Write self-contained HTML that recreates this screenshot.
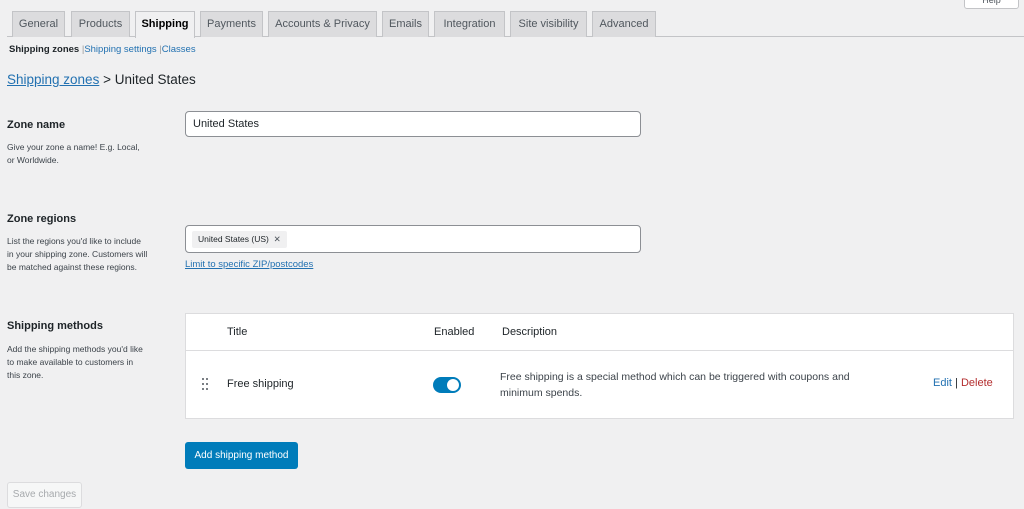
<!DOCTYPE html>
<html><head><style>
*{box-sizing:border-box;margin:0;padding:0}
body{width:1024px;height:509px;background:#f0f0f1;font-family:"Liberation Sans",sans-serif;color:#1d2327;position:relative;overflow:hidden;font-size:11px}
.a{position:absolute}
.tab{position:absolute;top:11px;height:26px;background:#dcdcde;border:1px solid #c3c4c7;border-bottom:none;font-size:11px;color:#50575e;text-align:center;line-height:24px}
.tab.on{background:#f0f0f1;color:#000;height:27px;font-weight:bold}
.lbl{font-size:11px;font-weight:bold;color:#1d2327}
.desc{font-size:8.5px;color:#3c434a;line-height:13px}
.inp{position:absolute;background:#fff;border:1px solid #8c8f94;border-radius:4px}
a{color:#2271b1}
</style></head><body>
<div class="a" style="left:964px;top:-6px;width:55px;height:15px;background:#fff;border:1px solid #c3c4c7;border-radius:3px;font-size:9px;text-align:center;color:#50575e">Help</div>
<div class="a" style="left:7px;top:36px;width:1017px;height:1px;background:#c3c4c7"></div>
<div class="tab" style="left:12px;width:53px">General</div>
<div class="tab" style="left:71px;width:59px">Products</div>
<div class="tab on" style="left:135px;width:60px">Shipping</div>
<div class="tab" style="left:200px;width:63px">Payments</div>
<div class="tab" style="left:268px;width:109px">Accounts &amp; Privacy</div>
<div class="tab" style="left:382px;width:47px">Emails</div>
<div class="tab" style="left:434px;width:71px">Integration</div>
<div class="tab" style="left:510px;width:77px">Site visibility</div>
<div class="tab" style="left:592px;width:64px">Advanced</div>
<div class="a" style="left:9px;top:44px;font-size:9.5px"><b>Shipping zones</b> <span style="color:#999">|</span><span style="color:#2271b1">Shipping settings</span> <span style="color:#999">|</span><span style="color:#2271b1">Classes</span></div>
<div class="a" style="left:7px;top:72px;font-size:13.5px"><a style="text-decoration:underline">Shipping zones</a> &gt; United States</div>
<div class="a lbl" style="left:7px;top:119px">Zone name</div>
<div class="a desc" style="left:7px;top:141px">Give your zone a name! E.g. Local,<br>or Worldwide.</div>
<div class="inp" style="left:185px;top:111px;width:456px;height:26px;padding:6px 7px;font-size:11px">United States</div>
<div class="a lbl" style="left:7px;top:213px">Zone regions</div>
<div class="a desc" style="left:7px;top:235px">List the regions you'd like to include<br>in your shipping zone. Customers will<br>be matched against these regions.</div>
<div class="inp" style="left:185px;top:225px;width:456px;height:28px"><div class="a" style="left:6px;top:5px;height:17px;background:#f0f0f1;border-radius:2px;font-size:8.5px;padding:3px 6px;color:#1d2327">United States (US) &nbsp;<span style="color:#50575e">✕</span></div></div>
<div class="a" style="left:185px;top:259px;font-size:9.5px"><a style="text-decoration:underline">Limit to specific ZIP/postcodes</a></div>
<div class="a lbl" style="left:7px;top:320px">Shipping methods</div>
<div class="a desc" style="left:7px;top:343px">Add the shipping methods you'd like<br>to make available to customers in<br>this zone.</div>
<div class="a" style="left:185px;top:313px;width:829px;height:106px;background:#fff;border:1px solid #dcdcde">
<div class="a" style="left:0;top:36px;width:100%;height:1px;background:#dcdcde"></div>
<div class="a" style="left:41px;top:12px;font-size:11px">Title</div>
<div class="a" style="left:248px;top:12px;font-size:11px">Enabled</div>
<div class="a" style="left:316px;top:12px;font-size:11px">Description</div>
<svg class="a" style="left:16px;top:64px" width="6" height="12"><g fill="#50575e"><circle cx="1" cy="1" r="1"/><circle cx="5" cy="1" r="1"/><circle cx="1" cy="6" r="1"/><circle cx="5" cy="6" r="1"/><circle cx="1" cy="11" r="1"/><circle cx="5" cy="11" r="1"/></g></svg>
<div class="a" style="left:41px;top:64px;font-size:11px">Free shipping</div>
<div class="a" style="left:247px;top:63px;width:28px;height:16px;border-radius:8px;background:#007cba"><div class="a" style="left:14px;top:2px;width:12px;height:12px;border-radius:6px;background:#fff"></div></div>
<div class="a" style="left:314px;top:55px;font-size:10.5px;line-height:16px;color:#3c434a">Free shipping is a special method which can be triggered with coupons and<br>minimum spends.</div>
<div class="a" style="left:747px;top:63px;font-size:11px"><span style="color:#2271b1">Edit</span> | <span style="color:#b32d2e">Delete</span></div>
</div>
<div class="a" style="left:185px;top:442px;width:113px;height:27px;background:#007cba;border-radius:3px;color:#fff;font-size:10px;text-align:center;line-height:28px">Add shipping method</div>
<div class="a" style="left:7px;top:482px;width:75px;height:26px;border:1px solid #dcdcde;border-radius:3px;color:#a7aaad;font-size:10px;text-align:center;line-height:24px;background:#f6f7f7">Save changes</div>
</body></html>
